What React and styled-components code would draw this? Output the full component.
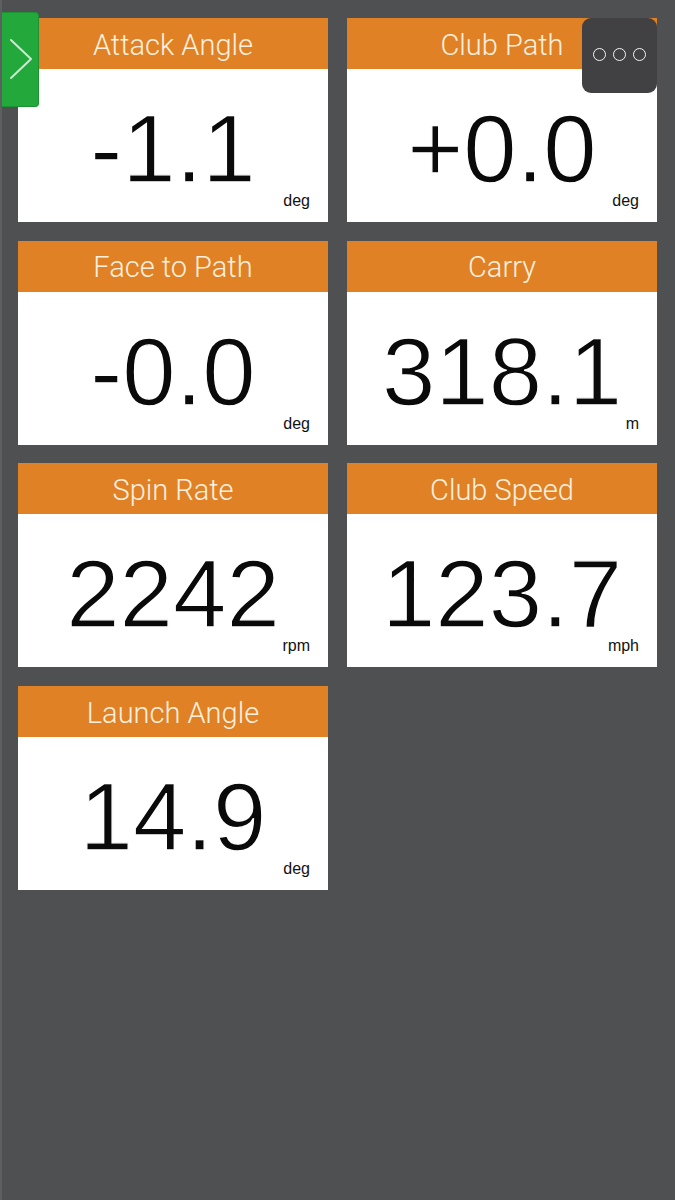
import styled, { createGlobalStyle } from "styled-components"

const GlobalStyle = createGlobalStyle`
    html, body {
        margin: 0;
        padding: 0;
        background: #4f5052;
    }
    body {
        font-family: "Liberation Sans", Arial, sans-serif;
    }
`

const stats = [
    { title: 'Attack Angle', value: '-1.1', unit: 'deg' },
    { title: 'Club Path', value: '+0.0', unit: 'deg' },
    { title: 'Face to Path', value: '-0.0', unit: 'deg' },
    { title: 'Carry', value: '318.1', unit: 'm' },
    { title: 'Spin Rate', value: '2242', unit: 'rpm' },
    { title: 'Club Speed', value: '123.7', unit: 'mph' },
    { title: 'Launch Angle', value: '14.9', unit: 'deg' },
]

const StatCard = ({ stat }) => {
    return (
        <Card>
            <Header>{stat.title}</Header>
            <Body>
                <Value>{stat.value}</Value>
                <Unit>{stat.unit}</Unit>
            </Body>
        </Card>
    )
}

const App = () => {
    return (
        <>
            <GlobalStyle />
            <Page>
                <SideTab>
                    <svg width="37" height="95" viewBox="0 0 37 95">
                        <polyline
                            points="10,27 30,46 10,65"
                            fill="none"
                            stroke="#cde9d1"
                            strokeWidth="2"
                            strokeLinecap="round"
                            strokeLinejoin="round"
                        />
                    </svg>
                </SideTab>
                <MenuButton>
                    <Dot />
                    <Dot />
                    <Dot />
                </MenuButton>
                <Grid>
                    {stats.map(s => <StatCard key={s.title} stat={s} />)}
                </Grid>
            </Page>
        </>
    )
}

export default App

const Page = styled.div`
    position: relative;
    width: 675px;
    height: 1200px;
    box-sizing: border-box;
    padding: 18px 18px 0 18px;
    background: #4f5052;
    border-left: 2px solid #5e5f61;
    overflow: hidden;
`
const Grid = styled.div`
    display: grid;
    grid-template-columns: 310px 310px;
    grid-auto-rows: 204px;
    column-gap: 19px;
    row-gap: 18.7px;
    margin-left: -2px;
`
const Card = styled.div`
    display: flex;
    flex-direction: column;
    background: #ffffff;
`
const Header = styled.div`
    height: 51px;
    flex-shrink: 0;
    display: flex;
    align-items: center;
    justify-content: center;
    background: #e08126;
    color: #fdf0df;
    font-family: Roboto, "Liberation Sans", sans-serif;
    font-weight: 300;
    font-size: 29px;
    line-height: 1;
    padding-top: 3px;
    box-sizing: border-box;
`
const Body = styled.div`
    flex: 1;
    display: flex;
    flex-direction: column;
    padding: 40px 18px 0 18px;
`
const Value = styled.div`
    text-align: center;
    font-size: 96px;
    line-height: 80px;
    color: #0a0a0a;
    -webkit-text-stroke: 1.3px #ffffff;
`
const Unit = styled.div`
    margin-top: 4px;
    text-align: right;
    font-size: 16px;
    line-height: 15px;
    color: #111;
`
const SideTab = styled.div`
    position: absolute;
    left: -1px;
    top: 12px;
    width: 38px;
    height: 95px;
    background: #22a83b;
    border: 1px solid #1d9232;
    border-left: none;
    border-radius: 0 4px 4px 0;
    box-sizing: border-box;
    z-index: 2;
    svg {
        display: block;
    }
`
const MenuButton = styled.div`
    position: absolute;
    left: 580px;
    top: 18px;
    width: 75px;
    height: 75px;
    border-radius: 9px;
    background: #414143;
    display: flex;
    align-items: center;
    justify-content: center;
    gap: 7px;
    padding-bottom: 3px;
    box-sizing: border-box;
    z-index: 2;
`
const Dot = styled.span`
    width: 13px;
    height: 13px;
    box-sizing: border-box;
    border: 1.6px solid #f4f4f4;
    border-radius: 50%;
`
